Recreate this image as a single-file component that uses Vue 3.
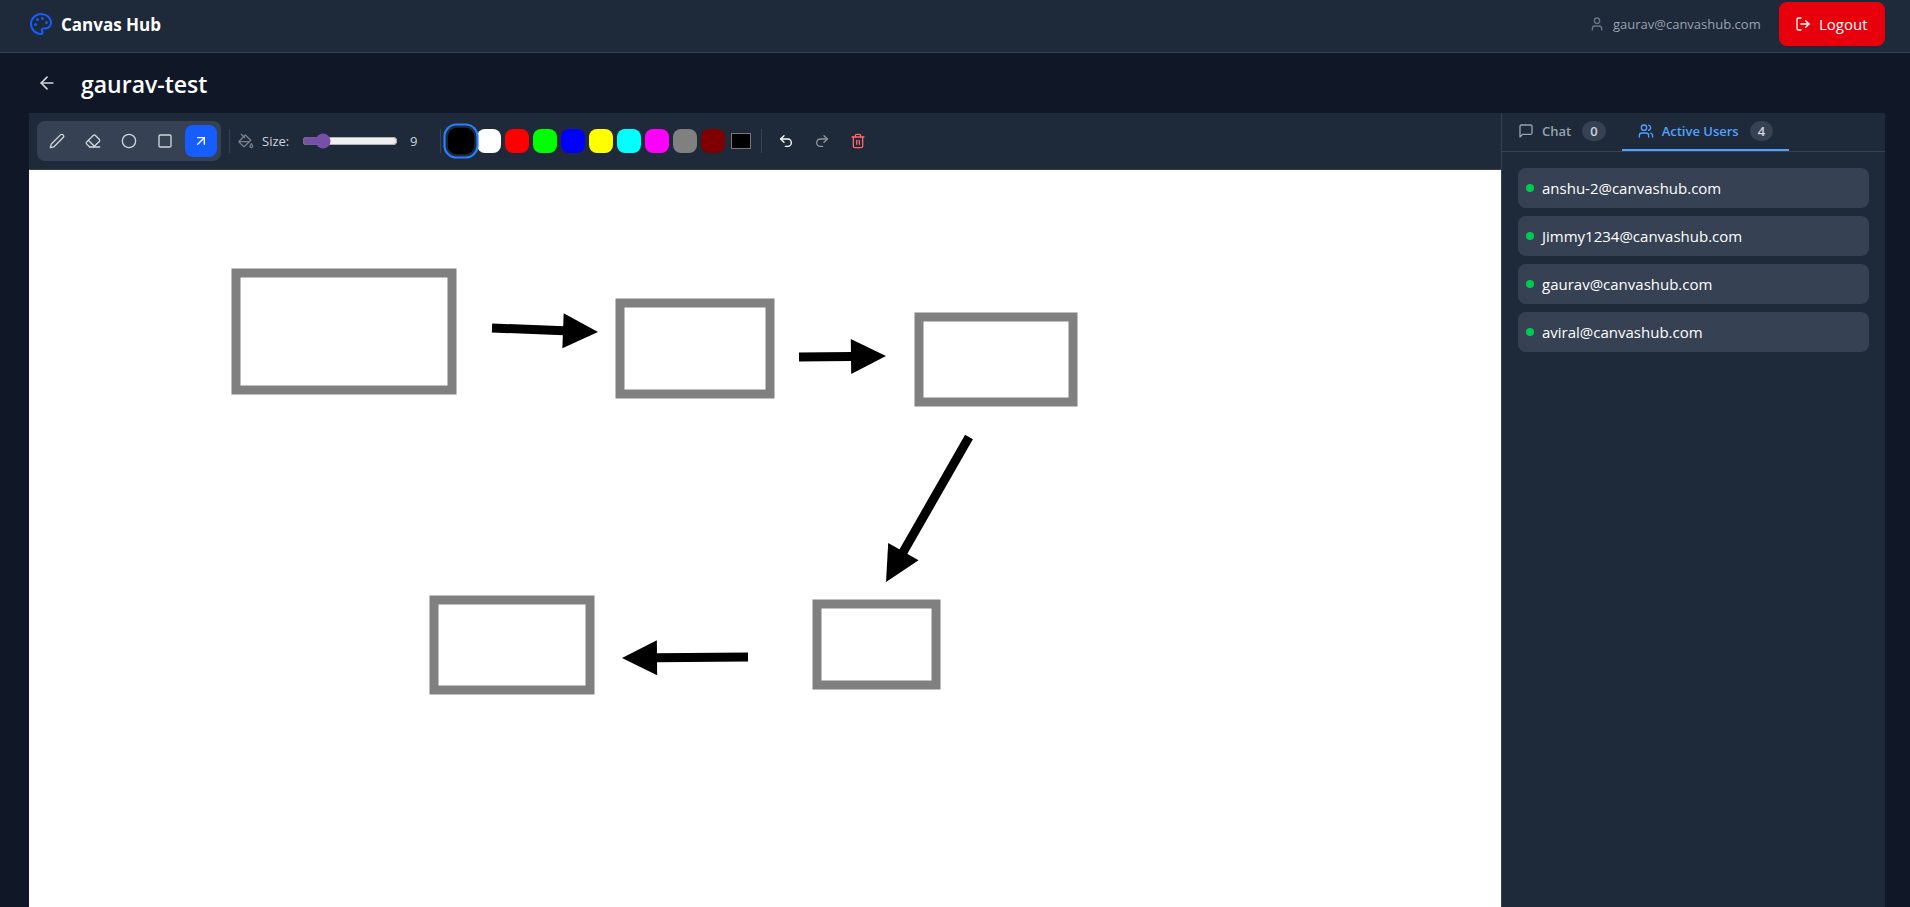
<script setup>
import { ref } from 'vue'

const tool = ref('arrow')
const size = ref(9)
const color = ref('#000000')
const tab = ref('users')

const icons = {
  pencil: ['M21.174 6.812a1 1 0 0 0-3.986-3.987L3.842 16.174a2 2 0 0 0-.5.83l-1.321 4.352a.5.5 0 0 0 .623.622l4.353-1.32a2 2 0 0 0 .83-.497z'],
  eraser: ['m7 21-4.3-4.3c-1-1-1-2.5 0-3.4l9.6-9.6c1-1 2.5-1 3.4 0l5.6 5.6c1 1 1 2.5 0 3.4L13 21', 'M22 21H7', 'm5 11 9 9'],
  circle: ['M2 12a10 10 0 1 0 20 0a10 10 0 1 0-20 0'],
  square: ['M5 3h14a2 2 0 0 1 2 2v14a2 2 0 0 1-2 2H5a2 2 0 0 1-2-2V5a2 2 0 0 1 2-2z'],
  arrow: ['M7 7h10v10', 'M7 17 17 7'],
  bucket: ['m19 11-8-8-8.6 8.6a2 2 0 0 0 0 2.8l5.2 5.2c.8.8 2 .8 2.8 0L19 11Z', 'm5 2 5 5', 'M2 13h15', 'M22 20a2 2 0 1 1-4 0c0-1.6 1.7-2.4 2-4 .3 1.6 2 2.4 2 4Z'],
  undo: ['M9 14 4 9l5-5', 'M4 9h10.5a5.5 5.5 0 0 1 5.5 5.5a5.5 5.5 0 0 1-5.5 5.5H11'],
  redo: ['m15 14 5-5-5-5', 'M20 9H9.5A5.5 5.5 0 0 0 4 14.5A5.5 5.5 0 0 0 9.5 20H13'],
  trash: ['M3 6h18', 'M19 6v14c0 1-1 2-2 2H7c-1 0-2-1-2-2V6', 'M8 6V4c0-1 1-2 2-2h4c1 0 2 1 2 2v2', 'M10 11v6', 'M14 11v6'],
}

const tools = [
  { id: 'pencil', label: 'Pencil' },
  { id: 'eraser', label: 'Eraser' },
  { id: 'circle', label: 'Circle' },
  { id: 'square', label: 'Rectangle' },
  { id: 'arrow', label: 'Arrow' },
]
const swatches = ['#000000', '#ffffff', '#ff0000', '#00ff00', '#0000ff', '#ffff00', '#00ffff', '#ff00ff', '#808080', '#800000']
const users = ['anshu-2@canvashub.com', 'Jimmy1234@canvashub.com', 'gaurav@canvashub.com', 'aviral@canvashub.com']

const rects = [
  { x: 207, y: 103, w: 216, h: 117 },
  { x: 591, y: 133, w: 150, h: 91 },
  { x: 890, y: 147, w: 154, h: 85 },
  { x: 788, y: 434, w: 119, h: 81 },
  { x: 405, y: 430, w: 156, h: 90 },
]

const HEAD_LENGTH = 35
const HEAD_HALF = 17.5
const arrows = [
  [463, 158, 569, 162],
  [770, 187, 857, 186],
  [940, 267, 857, 412],
  [719, 487, 593, 488],
].map(([x1, y1, x2, y2]) => {
  const len = Math.hypot(x2 - x1, y2 - y1)
  const ux = (x2 - x1) / len
  const uy = (y2 - y1) / len
  const bx = x2 - ux * HEAD_LENGTH
  const by = y2 - uy * HEAD_LENGTH
  return {
    x1, y1, bx: bx + ux, by: by + uy,
    head: `${x2},${y2} ${bx - uy * HEAD_HALF},${by + ux * HEAD_HALF} ${bx + uy * HEAD_HALF},${by - ux * HEAD_HALF}`,
  }
})
</script>

<template>
  <div class="app">
    <header class="header">
      <div class="brand">
        <svg class="icon icon-lg brand-icon" viewBox="0 0 24 24" aria-hidden="true">
          <circle class="dot" cx="13.5" cy="6.5" r=".5" />
          <circle class="dot" cx="17.5" cy="10.5" r=".5" />
          <circle class="dot" cx="8.5" cy="7.5" r=".5" />
          <circle class="dot" cx="6.5" cy="12.5" r=".5" />
          <path d="M12 2C6.5 2 2 6.5 2 12s4.5 10 10 10c.926 0 1.648-.746 1.648-1.688 0-.437-.18-.835-.437-1.125-.29-.289-.438-.652-.438-1.125a1.64 1.64 0 0 1 1.668-1.668h1.996c3.051 0 5.555-2.503 5.555-5.554C21.965 6.012 17.461 2 12 2z" />
        </svg>
        <span class="brand-name">Canvas Hub</span>
      </div>
      <div class="account">
        <div class="account-user">
          <svg class="icon account-icon" viewBox="0 0 24 24" aria-hidden="true">
            <path d="M19 21v-2a4 4 0 0 0-4-4H9a4 4 0 0 0-4 4v2" />
            <circle cx="12" cy="7" r="4" />
          </svg>
          <span class="account-email">gaurav@canvashub.com</span>
        </div>
        <button class="logout" type="button">
          <svg class="icon" viewBox="0 0 24 24" aria-hidden="true">
            <path d="m16 17 5-5-5-5" />
            <path d="M21 12H9" />
            <path d="M9 21H5a2 2 0 0 1-2-2V5a2 2 0 0 1 2-2h4" />
          </svg>
          <span>Logout</span>
        </button>
      </div>
    </header>

    <div class="title-bar">
      <button class="back" type="button" aria-label="Back">
        <svg class="icon icon-md" viewBox="0 0 24 24" aria-hidden="true">
          <path d="m12 19-7-7 7-7" />
          <path d="M19 12H5" />
        </svg>
      </button>
      <h1 class="title">gaurav-test</h1>
    </div>

    <main class="workspace">
      <section class="board">
        <div class="toolbar">
          <div class="tools">
            <button
              v-for="t in tools"
              :key="t.id"
              type="button"
              class="tool"
              :class="{ active: tool === t.id }"
              :aria-label="t.label"
              :aria-pressed="tool === t.id"
              @click="tool = t.id"
            >
              <svg class="icon" viewBox="0 0 24 24" aria-hidden="true">
                <path v-for="d in icons[t.id]" :key="d" :d="d" />
              </svg>
            </button>
          </div>
          <span class="divider"></span>
          <div class="sizing">
            <svg class="icon faded" viewBox="0 0 24 24" aria-hidden="true">
              <path v-for="d in icons.bucket" :key="d" :d="d" />
            </svg>
            <label class="size-label" for="brush-size">Size:</label>
            <input id="brush-size" v-model.number="size" class="slider" type="range" min="1" max="50" />
            <output class="size-value" for="brush-size">{{ size }}</output>
          </div>
          <span class="divider"></span>
          <div class="palette">
            <button
              v-for="c in swatches"
              :key="c"
              type="button"
              class="swatch"
              :class="{ selected: color === c }"
              :style="{ backgroundColor: c }"
              :aria-label="'Color ' + c"
              @click="color = c"
            ></button>
            <input v-model="color" class="picker" type="color" aria-label="Custom color" />
          </div>
          <span class="divider"></span>
          <div class="actions">
            <button class="tool light" type="button" aria-label="Undo">
              <svg class="icon" viewBox="0 0 24 24" aria-hidden="true">
                <path v-for="d in icons.undo" :key="d" :d="d" />
              </svg>
            </button>
            <button class="tool light faded" type="button" aria-label="Redo" disabled>
              <svg class="icon" viewBox="0 0 24 24" aria-hidden="true">
                <path v-for="d in icons.redo" :key="d" :d="d" />
              </svg>
            </button>
            <button class="tool danger" type="button" aria-label="Clear canvas">
              <svg class="icon" viewBox="0 0 24 24" aria-hidden="true">
                <path v-for="d in icons.trash" :key="d" :d="d" />
              </svg>
            </button>
          </div>
        </div>
        <svg class="canvas" role="img" aria-label="Drawing canvas">
          <rect v-for="(r, i) in rects" :key="'r' + i" class="shape" :x="r.x" :y="r.y" :width="r.w" :height="r.h" />
          <g v-for="(a, i) in arrows" :key="'a' + i">
            <line class="shaft" :x1="a.x1" :y1="a.y1" :x2="a.bx" :y2="a.by" />
            <polygon :points="a.head" />
          </g>
        </svg>
      </section>

      <aside class="sidebar">
        <div class="tabs" role="tablist">
          <button class="tab" :class="{ current: tab === 'chat' }" type="button" role="tab" :aria-selected="tab === 'chat'" @click="tab = 'chat'">
            <svg class="icon" viewBox="0 0 24 24" aria-hidden="true">
              <path d="M21 15a2 2 0 0 1-2 2H7l-4 4V5a2 2 0 0 1 2-2h14a2 2 0 0 1 2 2z" />
            </svg>
            <span>Chat</span>
            <span class="badge">0</span>
          </button>
          <button class="tab" :class="{ current: tab === 'users' }" type="button" role="tab" :aria-selected="tab === 'users'" @click="tab = 'users'">
            <svg class="icon" viewBox="0 0 24 24" aria-hidden="true">
              <path d="M16 21v-2a4 4 0 0 0-4-4H6a4 4 0 0 0-4 4v2" />
              <circle cx="9" cy="7" r="4" />
              <path d="M22 21v-2a4 4 0 0 0-3-3.87" />
              <path d="M16 3.13a4 4 0 0 1 0 7.75" />
            </svg>
            <span>Active Users</span>
            <span class="badge">4</span>
          </button>
        </div>
        <ul class="users">
          <li v-for="u in users" :key="u" class="user">
            <span class="online"></span>
            <span>{{ u }}</span>
          </li>
        </ul>
      </aside>
    </main>
  </div>
</template>

<style>
body {
  background: #101828;
}
</style>

<style scoped>
.app {
  display: flex;
  flex-direction: column;
  height: 100vh;
  overflow: hidden;
  background: #101828;
  color: #fff;
  font-family: "Open Sans", "Noto Sans", sans-serif;
  font-size: 15px;
  line-height: 24px;
}

button {
  border: 0;
  padding: 0;
  background: none;
  color: inherit;
  font: inherit;
  cursor: pointer;
}

.icon {
  flex: none;
  display: block;
  width: 16px;
  height: 16px;
  fill: none;
  stroke: currentColor;
  stroke-width: 2;
  stroke-linecap: round;
  stroke-linejoin: round;
}

.icon-md {
  width: 20px;
  height: 20px;
}

.icon-lg {
  width: 24px;
  height: 24px;
}

.header {
  display: flex;
  align-items: center;
  justify-content: space-between;
  padding: 2px 25px 6px 29px;
  background: #1e2939;
  border-bottom: 1px solid #364153;
}

.brand {
  display: flex;
  align-items: center;
  gap: 8px;
}

.brand-icon {
  color: #155dfc;
}

.dot {
  fill: currentColor;
}

.brand-name {
  padding-top: 2px;
  font-size: 17px;
  font-weight: 700;
}

.account {
  display: flex;
  align-items: center;
  gap: 16px;
}

.account-user {
  display: flex;
  align-items: center;
  gap: 8px;
  color: #99a1af;
  font-size: 13px;
}

.account-email {
  min-width: 150px;
}

.account-icon {
  color: #6a7282;
}

.logout {
  display: flex;
  align-items: center;
  gap: 8px;
  min-width: 106px;
  height: 44px;
  padding: 0 16px;
  border-radius: 8px;
  background: #e7000b;
}

.title-bar {
  display: flex;
  align-items: center;
  gap: 16px;
  height: 60px;
  padding: 0 29px;
}

.back {
  display: grid;
  place-items: center;
  width: 36px;
  height: 36px;
  color: #d1d5dc;
}

.title {
  margin: 0;
  padding-top: 2px;
  font-size: 23px;
  font-weight: 600;
  line-height: 32px;
}

.workspace {
  flex: 1;
  display: flex;
  min-height: 0;
  padding: 0 25px 0 29px;
}

.board {
  flex: 1;
  display: flex;
  flex-direction: column;
  min-width: 0;
}

.toolbar {
  display: flex;
  align-items: center;
  gap: 8px;
  padding: 8px;
  background: #1e2939;
  border-bottom: 1px solid #364153;
  font-size: 13px;
}

.tools {
  display: flex;
  gap: 4px;
  padding: 4px;
  border-radius: 8px;
  background: #364153;
}

.actions {
  display: flex;
  gap: 4px;
}

.tool {
  display: grid;
  place-items: center;
  width: 32px;
  height: 32px;
  border-radius: 8px;
  color: #d1d5dc;
}

.tool.active {
  background: #155dfc;
  color: #fff;
}

.light {
  color: #fff;
}

.danger {
  color: #ff6467;
}

.faded {
  opacity: 0.5;
}

.divider {
  width: 1px;
  height: 24px;
  background: #364153;
}

.sizing {
  display: flex;
  align-items: center;
  gap: 8px;
  color: #d1d5dc;
}

.size-label {
  width: 32px;
}

.slider {
  width: 96px;
  height: 16px;
  margin: 0;
  accent-color: #754fa8;
}

.size-value {
  box-sizing: border-box;
  width: 26px;
  padding-left: 4px;
}

.palette {
  display: flex;
  gap: 4px;
}

.swatch {
  width: 24px;
  height: 24px;
  border-radius: 8px;
}

.swatch.selected {
  transform: scale(1.1);
  box-shadow: 0 0 0 2px #1e2939, 0 0 0 4px #2b7fff;
}

.picker {
  width: 24px;
  height: 24px;
  padding: 0;
  border: 0;
  background: none;
}

.picker::-webkit-color-swatch-wrapper {
  padding: 4px 2px;
}

.picker::-webkit-color-swatch {
  border: 1px solid #777;
  border-radius: 0;
}

.canvas {
  flex: 1;
  display: block;
  width: 100%;
  min-height: 0;
  background: #fff;
}

.shape {
  fill: none;
  stroke: #808080;
  stroke-width: 9;
}

.shaft {
  stroke: #000;
  stroke-width: 9;
}

.sidebar {
  flex: none;
  box-sizing: border-box;
  width: 384px;
  background: #1e2939;
  border-left: 1px solid #364153;
}

.tabs {
  display: flex;
  border-bottom: 1px solid #364153;
}

.tab {
  display: flex;
  align-items: center;
  gap: 8px;
  padding: 8px 16px;
  border-bottom: 2px solid transparent;
  color: #99a1af;
  font-size: 13px;
  font-weight: 600;
  line-height: 20px;
}

.tab.current {
  border-bottom-color: #51a2ff;
  color: #51a2ff;
}

.badge {
  margin-left: 3px;
  padding: 0 8px;
  border-radius: 10px;
  background: #364153;
  color: #d1d5dc;
}

.users {
  display: flex;
  flex-direction: column;
  gap: 8px;
  margin: 0;
  padding: 16px;
  list-style: none;
}

.user {
  display: flex;
  align-items: center;
  gap: 8px;
  padding: 8px;
  border-radius: 8px;
  background: #364153;
}

.online {
  width: 8px;
  height: 8px;
  border-radius: 50%;
  background: #00c950;
}
</style>
